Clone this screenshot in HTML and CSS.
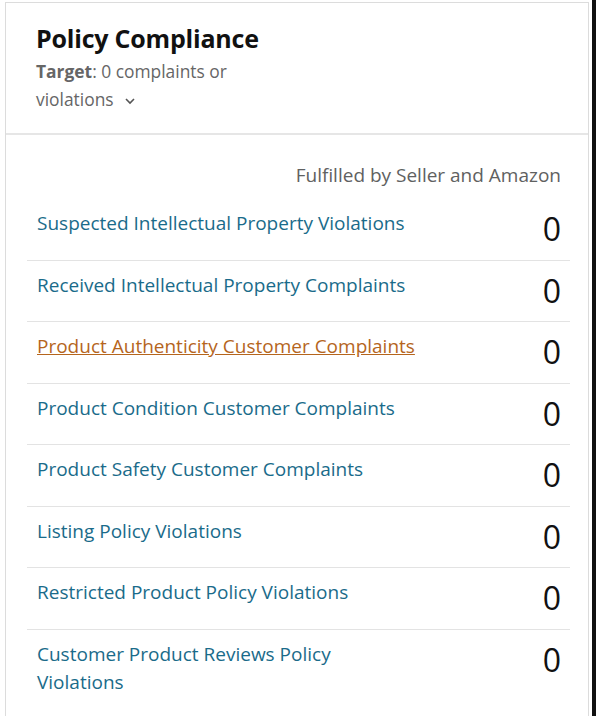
FILE: index.html
```html
<!DOCTYPE html>
<html>
<head>
<meta charset="utf-8">
<link rel="stylesheet" href="styles.css">
</head>
<body>
<div class="page">
  <section class="card">
    <header class="card-head">
      <h1 class="title">Policy Compliance</h1>
      <p class="target"><span class="label">Target</span>: 0 complaints or violations <span class="chev"><svg width="12" height="8" viewBox="0 0 12 8"><path d="M2 2 L6 6 L10 2" fill="none" stroke="#555" stroke-width="1.6"/></svg></span></p>
    </header>
    <div class="card-body">
      <div class="scope">Fulfilled by Seller and Amazon</div>
      <ul class="rows">
        <li class="row"><a class="link">Suspected Intellectual Property Violations</a><span class="num">0</span></li>
        <li class="row"><a class="link">Received Intellectual Property Complaints</a><span class="num">0</span></li>
        <li class="row"><a class="link hover">Product Authenticity Customer Complaints</a><span class="num">0</span></li>
        <li class="row"><a class="link">Product Condition Customer Complaints</a><span class="num">0</span></li>
        <li class="row"><a class="link">Product Safety Customer Complaints</a><span class="num">0</span></li>
        <li class="row"><a class="link">Listing Policy Violations</a><span class="num">0</span></li>
        <li class="row"><a class="link">Restricted Product Policy Violations</a><span class="num">0</span></li>
        <li class="row"><a class="link">Customer Product Reviews Policy Violations</a><span class="num">0</span></li>
      </ul>
    </div>
  </section>
  <div class="edge"></div>
</div>
</body>
</html>
```

FILE: styles.css
```css
html, body {
  margin: 0;
  padding: 0;
  background: #ffffff;
}
body {
  font-family: "Open Sans", "Noto Sans", sans-serif;
  color: #111;
}
.page {
  display: flex;
  width: 596px;
  height: 716px;
  overflow: hidden;
}
.card {
  margin: 2px 0 0 5px;
  width: 584px;
  border: 1px solid #dcdcdc;
  border-bottom: none;
  background: #fff;
  box-sizing: border-box;
  height: 714px;
}
.edge {
  margin-left: 3px;
  width: 4px;
  background: #111;
  flex: none;
}
.card-head {
  padding: 20px 20px 18px 30px;
  border-bottom: 2px solid #e6e6e6;
  height: 132px;
  box-sizing: border-box;
}
.title {
  margin: 0;
  font-size: 25px;
  font-weight: 700;
  line-height: 30px;
  color: #111;
  letter-spacing: -0.2px;
}
.target {
  margin: 5px 0 0;
  width: 240px;
  font-size: 17.4px;
  line-height: 27px;
  color: #666;
}
.label {
  font-weight: 700;
  color: #666;
}
.chev {
  display: inline-block;
  margin-left: 6px;
  vertical-align: 1px;
}
.card-body {
  padding: 26px 18px 0 21px;
}
.scope {
  text-align: right;
  font-size: 19px;
  line-height: 28px;
  color: #5f6161;
  padding-right: 9px;
}
.rows {
  list-style: none;
  margin: 10px 0 0;
  padding: 0;
}
.row {
  display: flex;
  justify-content: space-between;
  align-items: flex-start;
  padding: 10px 9px 0 10px;
  height: 61.5px;
  box-sizing: border-box;
  border-bottom: 1px solid #e3e3e3;
}
.row:last-child {
  border-bottom: none;
}
.link {
  font-size: 19px;
  line-height: 28px;
  color: #1a6b8a;
  max-width: 375px;
}
.link.hover {
  color: #b5651d;
  text-decoration: underline;
  max-width: none;
}
.num {
  font-size: 32px;
  line-height: 40px;
  font-weight: 400;
  color: #111;
}
```
